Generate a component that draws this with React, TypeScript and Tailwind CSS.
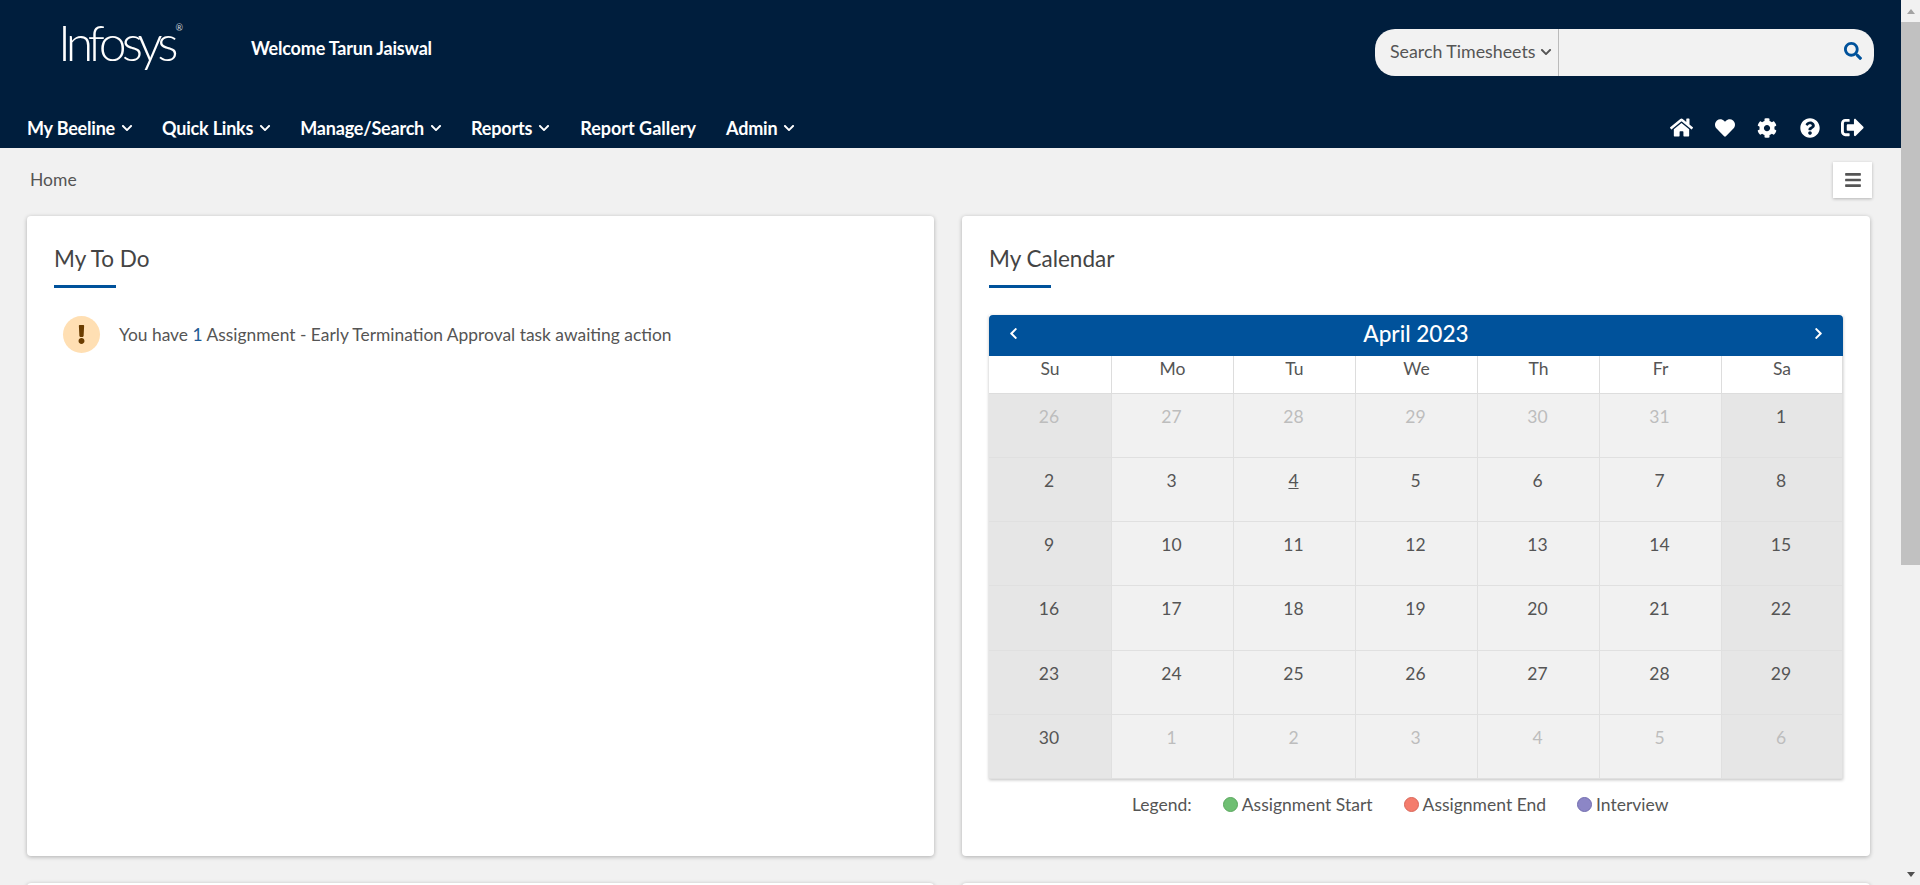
import { FaChevronDown, FaChevronLeft, FaChevronRight, FaCog, FaHeart, FaHome, FaQuestionCircle, FaSearch, FaSignOutAlt, FaBars, FaExclamation } from 'react-icons/fa';

const NAV = [
  { label: 'My Beeline', menu: true, extra: 'tracking-[-0.2px]' },
  { label: 'Quick Links', menu: true, extra: 'tracking-[-0.2px]' },
  { label: 'Manage/Search', menu: true, extra: 'tracking-[-0.2px]' },
  { label: 'Reports', menu: true, extra: 'mr-[1px] tracking-[-0.2px]' },
  { label: 'Report Gallery', menu: false, extra: 'mr-[1px] tracking-normal' },
  { label: 'Admin', menu: true, extra: 'tracking-[-0.2px]' },
];

const WEEKDAYS = ['Su', 'Mo', 'Tu', 'We', 'Th', 'Fr', 'Sa'];

const WEEKS = [
  [26, 27, 28, 29, 30, 31, 1],
  [2, 3, 4, 5, 6, 7, 8],
  [9, 10, 11, 12, 13, 14, 15],
  [16, 17, 18, 19, 20, 21, 22],
  [23, 24, 25, 26, 27, 28, 29],
  [30, 1, 2, 3, 4, 5, 6],
];

const LEGEND = [
  { label: 'Assignment Start', dot: 'bg-[#6fbf73] border-[#5aa75e]', gap: 'mr-[31px]' },
  { label: 'Assignment End', dot: 'bg-[#f47c6c] border-[#d9675a]', gap: 'mr-[31px]' },
  { label: 'Interview', dot: 'bg-[#8c86c6] border-[#736daf]', gap: '' },
];

function Header() {
  return (
    <header className="flex h-[148px] flex-col bg-[#001e3d] text-white">
      <div className="flex h-[105px] items-start">
        <div className="relative ml-[58px] mt-[12px] h-[60px] w-[120px]">
          <span className="text-[50px] font-light leading-[60px] tracking-[-5px]">Infosys</span>
          <span className="absolute right-[-5px] top-[11px] text-[9px] leading-none text-gray-300">®</span>
        </div>
        <div className="ml-[73px] mt-[37px] text-[18px] font-bold leading-[23px] tracking-[-0.2px]">Welcome Tarun Jaiswal</div>
        <div className="ml-auto mr-[27px] mt-[29px] flex h-[47px] w-[499px] items-center rounded-[20px] bg-[#f2f2f2] text-[#555]">
          <div className="flex h-full w-[184px] items-center border-r border-[#bbb] pb-[2px] pl-[15px] text-[17.8px]">
            <span>Search Timesheets</span>
            <FaChevronDown className="ml-[4px] text-[12px]" />
          </div>
          <FaSearch className="mb-[4px] ml-auto mr-[12px] text-[18px] text-[#00529b]" />
        </div>
      </div>
      <div className="flex flex-1 items-start">
        <nav className="ml-[27px] flex gap-[29px] pt-[10px]">
          {NAV.map((item) => (
            <div key={item.label} className={`flex items-center gap-[6px] text-[18px] font-bold leading-[26px] ${item.extra}`}>
              {item.label}
              {item.menu && <FaChevronDown className="text-[12px]" />}
            </div>
          ))}
        </nav>
        <div className="ml-auto mr-[37px] flex items-center gap-[21px] pt-[11px]">
          <FaHome className="text-[23px]" />
          <FaHeart className="ml-[1px] text-[20px]" />
          <FaCog className="ml-[1px] text-[20px]" />
          <FaQuestionCircle className="ml-[2px] text-[20px]" />
          <FaSignOutAlt className="text-[23px]" />
        </div>
      </div>
    </header>
  );
}

function CardTitle({ children }: { children: string }) {
  return (
    <div>
      <h2 className="text-[22.5px] font-normal leading-[31px] text-[#444]">{children}</h2>
      <div className="mt-[11px] h-[3px] w-[62px] bg-[#00529b]" />
    </div>
  );
}

function Card({ children }: { children?: React.ReactNode }) {
  return (
    <section className="h-[640px] rounded-[4px] bg-white pl-[27px] pr-[27px] pt-[27px] shadow-[0_1px_4px_rgba(0,0,0,0.28)]">
      {children}
    </section>
  );
}

function Calendar() {
  return (
    <div className="mt-[27px] shadow-[0_1px_3px_rgba(0,0,0,0.25)]">
      <div className="flex h-[41px] items-center justify-between rounded-t-[4px] bg-[#00529b] px-[18px] text-white">
        <FaChevronLeft className="mb-[4px] text-[13px]" />
        <div className="mb-[3px] text-[22.6px] font-medium leading-[30px]">April 2023</div>
        <FaChevronRight className="mb-[4px] text-[13px]" />
      </div>
      <div className="grid grid-cols-[123px_122px_122px_122px_122px_122px_1fr]">
        {WEEKDAYS.map((d) => (
          <div key={d} className="h-[38px] border-b border-r border-[#ddd] bg-white pt-[1px] text-center text-[17.5px] leading-[24px] last:border-r-0">
            {d}
          </div>
        ))}
        {WEEKS.map((week, w) =>
          week.map((day, i) => {
            const outside = (w === 0 && day > 7) || (w === 5 && day < 20);
            const weekend = i === 0 || i === 6;
            return (
              <div
                key={`${w}-${i}`}
                className={`h-[64.17px] border-b border-r border-[#e0e0e0] pr-[2px] pt-[11px] text-center text-[17.5px] leading-[24px] ${
                  weekend ? 'bg-[#e6e6e6]' : 'bg-[#f1f1f1]'
                } ${outside ? 'text-[#bdbdbd]' : 'text-[#555]'} ${w === 1 && day === 4 ? 'underline' : ''}`}
              >
                {day}
              </div>
            );
          })
        )}
      </div>
    </div>
  );
}

function Legend() {
  return (
    <div className="mt-[14px] flex items-center pl-[143px] text-[17.5px] leading-[24px] text-[#555]">
      <span className="mr-[31px]">Legend:</span>
      {LEGEND.map((l) => (
        <span key={l.label} className={`flex items-center gap-[4px] ${l.gap}`}>
          <span className={`h-[15px] w-[15px] rounded-full border ${l.dot}`} />
          {l.label}
        </span>
      ))}
    </div>
  );
}

function Scrollbar() {
  return (
    <div className="flex w-[19px] flex-col items-center bg-[#f1f1f1]">
      <div className="flex h-[22px] w-full items-center justify-center">
        <div className="h-0 w-0 border-x-[4px] border-b-[5px] border-x-transparent border-b-[#a3a3a3]" />
      </div>
      <div className="h-[543px] w-full bg-[#c1c1c1]" />
      <div className="flex-1" />
      <div className="flex h-[22px] w-full items-center justify-center">
        <div className="h-0 w-0 border-x-[4px] border-t-[5px] border-x-transparent border-t-[#505050]" />
      </div>
    </div>
  );
}

export default function App() {
  return (
    <div className="flex h-[885px] overflow-hidden bg-[#f1f1f1] font-['Lato',sans-serif] text-[#555]">
      <div className="min-w-0 flex-1">
        <Header />
        <div className="flex h-[68px] items-center justify-between pl-[30px] pr-[29px]">
          <span className="-mt-[5px] text-[17.5px] leading-[24px]">Home</span>
          <button className="-mt-[4px] flex h-[36px] w-[39px] items-center justify-center bg-white shadow-[0_1px_3px_rgba(0,0,0,0.25)]">
            <FaBars className="text-[18px]" />
          </button>
        </div>
        <div className="grid grid-cols-[907px_908px] gap-x-[28px] gap-y-[27px] pl-[27px]">
          <Card>
            <CardTitle>My To Do</CardTitle>
            <div className="ml-[9px] mt-[28px] flex items-center gap-[19px]">
              <div className="flex h-[37px] w-[37px] items-center justify-center rounded-full bg-[#ffdfb3]">
                <FaExclamation className="text-[19px] text-[#6b3d00]" />
              </div>
              <p className="text-[17.4px] leading-[24px]">
                You have <span className="text-[#1f5a94]">1</span> Assignment - Early Termination Approval task awaiting action
              </p>
            </div>
          </Card>
          <Card>
            <CardTitle>My Calendar</CardTitle>
            <Calendar />
            <Legend />
          </Card>
          <Card />
          <Card />
        </div>
      </div>
      <Scrollbar />
    </div>
  );
}
